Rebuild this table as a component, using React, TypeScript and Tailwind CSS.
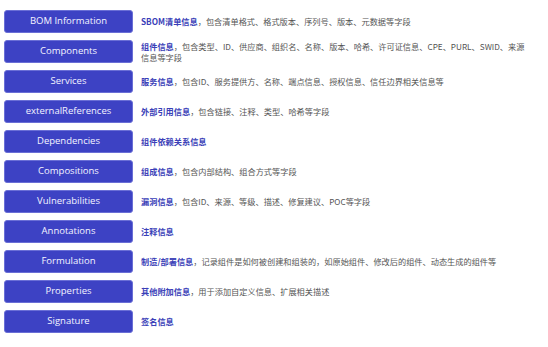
import React from 'react';

const rows: { name: string; label: string; desc: React.ReactNode }[] = [
  { name: 'BOM Information', label: 'SBOM清单信息', desc: '，包含清单格式、格式版本、序列号、版本、元数据等字段' },
  {
    name: 'Components',
    label: '组件信息',
    desc: (
      <>
        ，包含类型、ID、供应商、组织名、名称、版本、哈希、许可证信息、CPE、PURL、SWID、来源
        <br />
        信息等字段
      </>
    ),
  },
  { name: 'Services', label: '服务信息', desc: '，包含ID、服务提供方、名称、端点信息、授权信息、信任边界相关信息等' },
  { name: 'externalReferences', label: '外部引用信息', desc: '，包含链接、注释、类型、哈希等字段' },
  { name: 'Dependencies', label: '组件依赖关系信息', desc: '' },
  { name: 'Compositions', label: '组成信息', desc: '，包含内部结构、组合方式等字段' },
  { name: 'Vulnerabilities', label: '漏洞信息', desc: '，包含ID、来源、等级、描述、修复建议、POC等字段' },
  { name: 'Annotations', label: '注释信息', desc: '' },
  { name: 'Formulation', label: '制造/部署信息', desc: '，记录组件是如何被创建和组装的，如原始组件、修改后的组件、动态生成的组件等' },
  { name: 'Properties', label: '其他附加信息', desc: '，用于添加自定义信息、扩展相关描述' },
  { name: 'Signature', label: '签名信息', desc: '' },
];

export default function App() {
  return (
    <div className="w-[548px] h-[347px] bg-white pt-[10px] pl-[4px] flex flex-col gap-[7px] overflow-hidden">
      {rows.map((row) => (
        <div key={row.name} className="flex items-center gap-[8px]">
          <div
            className="w-[129px] h-[23px] shrink-0 flex items-center justify-center rounded-[3px] bg-[#3d42c4] border border-[#6a6fd6] text-[#f4f4ff] text-[9.5px]"
            style={{ fontFamily: '"Open Sans", "Noto Sans", sans-serif' }}
          >
            {row.name}
          </div>
          <div
            className="whitespace-nowrap text-[8.2px] leading-[11px] text-[#555]"
            style={{ fontFamily: '"Noto Sans CJK SC", "Noto Sans", sans-serif' }}
          >
            <span className="font-bold text-[#3b3fb8]">{row.label}</span>
            {row.desc}
          </div>
        </div>
      ))}
    </div>
  );
}
